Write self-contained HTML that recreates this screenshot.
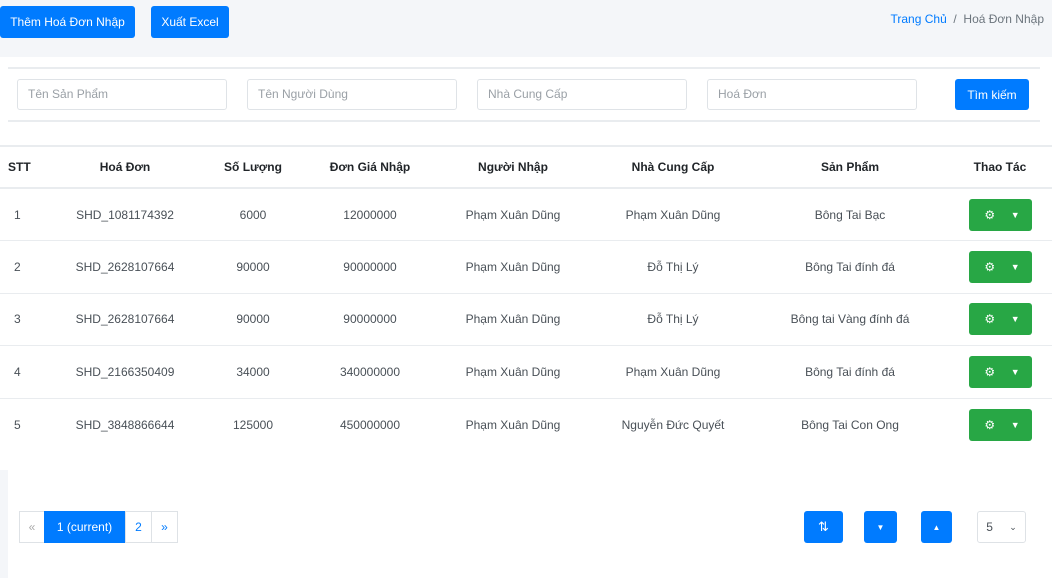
<!DOCTYPE html>
<html><head><meta charset="utf-8"><style>
*{box-sizing:border-box;margin:0;padding:0}
body{width:1052px;height:578px;overflow:hidden;background:#fff;font-family:"Liberation Sans",sans-serif;font-size:12px;color:#495057;position:relative}
.top{position:absolute;left:0;top:0;width:1052px;height:57px;background:#f4f6f9}
.btn{position:absolute;background:#007bff;color:#fff;border-radius:3px;display:flex;align-items:center;justify-content:center;font-size:12px}
.crumb{position:absolute;right:8px;top:12px;font-size:12px;color:#6c757d}
.crumb a{color:#007bff;text-decoration:none}
.hr{position:absolute;left:8px;width:1032px;height:2px;background:#e9ecef}
.inp{position:absolute;top:79px;height:31px;width:210px;border:1px solid #dfe3e7;border-radius:3px;padding-left:10px;line-height:29px;color:#9aa0a6}
table{position:absolute;left:0;top:145px;width:1052px;border-collapse:collapse}
th{height:42px;font-weight:bold;color:#212529;border-top:2px solid #e9ecef;border-bottom:2px solid #e9ecef;text-align:center}
td{height:52.6px;text-align:center;border-bottom:1px solid #e9ecef;color:#495057}
th:first-child,td:first-child{text-align:left;padding-left:8px}
td:first-child{padding-left:14px}
th:last-child,td:last-child{padding-left:12px}
.g{display:inline-flex;width:63px;height:32px;background:#28a745;border-radius:3px;align-items:center;justify-content:space-around;color:#fff;padding:0 4px 0 8px}
.pg{position:absolute;top:511px;height:32px;border:1px solid #dee2e6;display:flex;align-items:center;justify-content:center;color:#007bff;font-size:12px}
</style></head><body>
<div class="top"></div>
<div class="btn" style="left:0;top:6px;width:135px;height:32px">Thêm Hoá Đơn Nhập</div>
<div class="btn" style="left:151px;top:6px;width:78px;height:32px">Xuất Excel</div>
<div class="crumb"><a>Trang Chủ</a> &nbsp;/&nbsp; Hoá Đơn Nhập</div>
<div class="hr" style="top:67px"></div>
<div class="hr" style="top:120px"></div>
<div class="inp" style="left:17px">Tên Sản Phẩm</div>
<div class="inp" style="left:247px">Tên Người Dùng</div>
<div class="inp" style="left:477px">Nhà Cung Cấp</div>
<div class="inp" style="left:707px">Hoá Đơn</div>
<div class="btn" style="left:955px;top:79px;width:74px;height:31px">Tìm kiếm</div>
<table>
<tr><th style="width:40px">STT</th><th style="width:170px">Hoá Đơn</th><th style="width:86px">Số Lượng</th><th style="width:148px">Đơn Giá Nhập</th><th style="width:138px">Người Nhập</th><th style="width:182px">Nhà Cung Cấp</th><th style="width:172px">Sản Phẩm</th><th>Thao Tác</th></tr>
<tr><td>1</td><td>SHD_1081174392</td><td>6000</td><td>12000000</td><td>Phạm Xuân Dũng</td><td>Phạm Xuân Dũng</td><td>Bông Tai Bạc</td><td><span class="g">⚙<span style="font-size:9px">▼</span></span></td></tr>
<tr><td>2</td><td>SHD_2628107664</td><td>90000</td><td>90000000</td><td>Phạm Xuân Dũng</td><td>Đỗ Thị Lý</td><td>Bông Tai đính đá</td><td><span class="g">⚙<span style="font-size:9px">▼</span></span></td></tr>
<tr><td>3</td><td>SHD_2628107664</td><td>90000</td><td>90000000</td><td>Phạm Xuân Dũng</td><td>Đỗ Thị Lý</td><td>Bông tai Vàng đính đá</td><td><span class="g">⚙<span style="font-size:9px">▼</span></span></td></tr>
<tr><td>4</td><td>SHD_2166350409</td><td>34000</td><td>340000000</td><td>Phạm Xuân Dũng</td><td>Phạm Xuân Dũng</td><td>Bông Tai đính đá</td><td><span class="g">⚙<span style="font-size:9px">▼</span></span></td></tr>
<tr><td style="border:none">5</td><td style="border:none">SHD_3848866644</td><td style="border:none">125000</td><td style="border:none">450000000</td><td style="border:none">Phạm Xuân Dũng</td><td style="border:none">Nguyễn Đức Quyết</td><td style="border:none">Bông Tai Con Ong</td><td style="border:none"><span class="g">⚙<span style="font-size:9px">▼</span></span></td></tr>
</table>
<div style="position:absolute;left:0;top:470px;width:8px;height:108px;background:#f4f6f9"></div>
<div class="pg" style="left:19px;width:26px;color:#aaa">«</div>
<div class="pg" style="left:44px;width:81px;background:#007bff;color:#fff;border-color:#007bff">1 (current)</div>
<div class="pg" style="left:125px;width:27px">2</div>
<div class="pg" style="left:151px;width:27px">»</div>
<div class="btn" style="left:804px;top:511px;width:39px;height:32px;font-size:13px">⇅</div>
<div class="btn" style="left:864px;top:511px;width:33px;height:32px;font-size:8px">▼</div>
<div class="btn" style="left:921px;top:511px;width:31px;height:32px;font-size:8px">▲</div>
<div class="pg" style="left:977px;width:49px;color:#495057;justify-content:space-around;border-radius:3px">5 <span style="font-size:9px">⌄</span></div>
</body></html>
